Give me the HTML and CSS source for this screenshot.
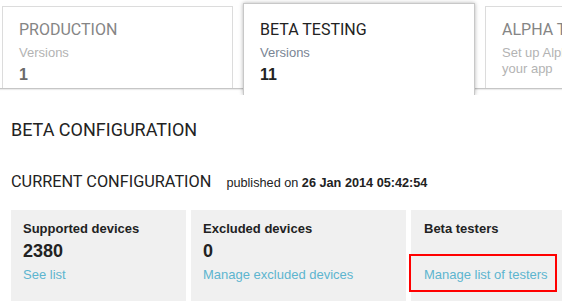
FILE: index.html
```html
<!DOCTYPE html>
<html lang="en">
<head>
    <meta charset="UTF-8">
    <title>Beta Testing</title>
    <link rel="stylesheet" href="styles.css">
</head>
<body>
    <!-- TRACK TABS -->
    <div class="tabs">
        <div class="tab">
            <div class="tab-title">PRODUCTION</div>
            <div class="tab-label">Versions</div>
            <div class="tab-count">1</div>
        </div>
        <div class="tab active">
            <div class="tab-title">BETA TESTING</div>
            <div class="tab-label">Versions</div>
            <div class="tab-count">11</div>
        </div>
        <div class="tab">
            <div class="tab-title">ALPHA TESTING</div>
            <div class="tab-label">Set up Alpha testing for<br>your app</div>
        </div>
    </div>

    <!-- CONFIGURATION -->
    <div class="config">
        <h2 class="section-title">BETA CONFIGURATION</h2>
        <div class="current-row">
            <h3 class="current-title">CURRENT CONFIGURATION</h3>
            <span class="published">published on <strong>26 Jan 2014 05:42:54</strong></span>
        </div>

        <div class="cards">
            <div class="card card-supported">
                <div class="card-title">Supported devices</div>
                <div class="card-value">2380</div>
                <a href="#" class="card-link">See list</a>
            </div>
            <div class="card card-excluded">
                <div class="card-title">Excluded devices</div>
                <div class="card-value">0</div>
                <a href="#" class="card-link">Manage excluded devices</a>
            </div>
            <div class="card card-testers">
                <div class="card-title">Beta testers</div>
                <div class="card-value">&nbsp;</div>
                <a href="#" class="card-link">Manage list of testers</a>
                <div class="highlight"></div>
            </div>
        </div>
    </div>
</body>
</html>
```

FILE: styles.css
```css
body {
    margin: 0;
    font-family: "Liberation Sans", Arial, sans-serif;
    background: #fff;
    overflow: hidden;
}

/* TABS */
.tabs {
    display: flex;
    gap: 10px;
    padding: 6px 0 0 2px;
    height: 82px;
    border-bottom: 1px solid #c6c6c6;
    box-shadow: 0 1px 1px rgba(0,0,0,0.08);
}

.tab {
    flex: 0 0 231px;
    box-sizing: border-box;
    height: 82px;
    padding: 13px 16px 0;
    border: 1px solid #dcdcdc;
    border-bottom: none;
    background: #fff;
    overflow: hidden;
    white-space: nowrap;
}

.tab.active {
    flex-basis: 232px;
    height: 92px;
    margin-top: -3px;
    padding-top: 16px;
    border-color: #c8c8c8;
    box-shadow: 0 0 4px rgba(0,0,0,0.3);
    clip-path: inset(-8px -8px 0 -8px);
    position: relative;
    z-index: 1;
}

.tab-title {
    font-family: Roboto, "Liberation Sans", sans-serif;
    font-size: 16px;
    line-height: 20px;
    color: #858585;
}

.tab-label {
    font-size: 13px;
    line-height: 16px;
    margin-top: 5px;
    color: #b3b3b3;
}

.tab-count {
    font-size: 16px;
    font-weight: bold;
    line-height: 20px;
    margin-top: 4px;
    color: #6a6a6a;
}

.tab.active .tab-title { color: #222; }
.tab.active .tab-label { color: #7a8594; }
.tab.active .tab-count { color: #222; }

/* CONFIGURATION */
.config {
    padding: 30px 0 0 11px;
}

.section-title {
    margin: 0;
    font-family: Roboto, "Liberation Sans", sans-serif;
    font-size: 18px;
    font-weight: normal;
    line-height: 22px;
    color: #222;
}

.current-row {
    display: flex;
    align-items: baseline;
    gap: 15px;
    margin-top: 31px;
}

.current-title {
    margin: 0;
    font-family: Roboto, "Liberation Sans", sans-serif;
    font-size: 16.3px;
    font-weight: normal;
    line-height: 20px;
    color: #222;
}

.published {
    font-size: 12.7px;
    color: #222;
}

/* CARDS */
.cards {
    display: flex;
    gap: 5px;
    margin-top: 18px;
}

.card {
    box-sizing: border-box;
    height: 100px;
    padding: 11px 12px 0;
    background: #f0f0f0;
}

.card-supported { flex: 0 0 175px; }
.card-excluded { flex: 0 0 215px; }
.card-testers { flex: 0 0 200px; position: relative; padding-left: 13px; }

.card-title {
    font-size: 13px;
    font-weight: bold;
    line-height: 16px;
    color: #222;
}

.card-value {
    font-size: 18px;
    font-weight: bold;
    line-height: 22px;
    margin-top: 3px;
    color: #222;
}

.card-link {
    display: inline-block;
    margin-top: 5px;
    font-size: 13px;
    line-height: 16px;
    color: #5db5cf;
    text-decoration: none;
}

.highlight {
    position: absolute;
    left: -2px;
    top: 44px;
    width: 144px;
    height: 34px;
    border: 2px solid #f00;
}
```
